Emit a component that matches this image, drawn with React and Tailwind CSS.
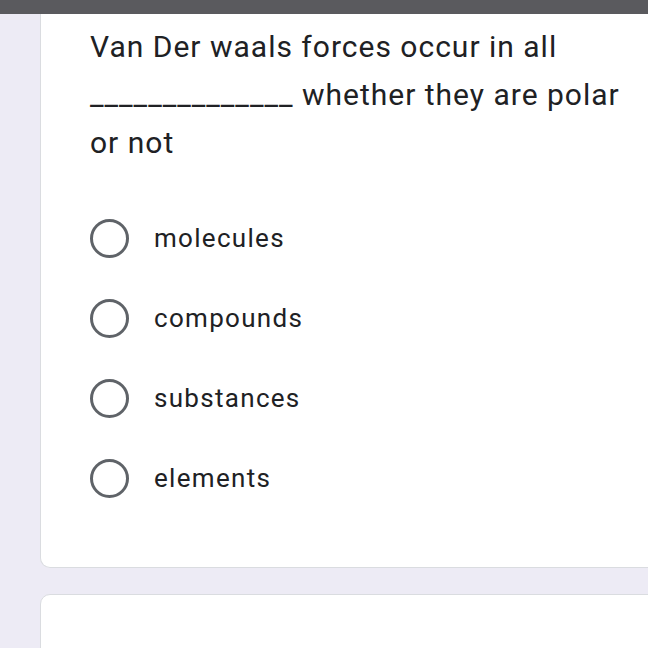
import React from "react";

const options = ["molecules", "compounds", "substances", "elements"];

export default function App() {
  return (
    <div className="w-[648px] h-[648px] overflow-hidden bg-[#edebf5] relative" style={{ fontFamily: "Roboto, sans-serif" }}>
      <div className="h-[14px] bg-[#5a5a5e]" />
      <div className="ml-[40px] w-[640px] h-[554px] bg-white border border-[#dadce0] border-t-0 rounded-bl-[10px] rounded-br-[10px] pl-[49px] pt-[9px]">
        <div className="text-[30px] leading-[48px] tracking-[1px] text-[#202124]">
          <div className="whitespace-nowrap">Van Der waals forces occur in all</div>
          <div className="whitespace-nowrap">______________ whether they are polar</div>
          <div>or not</div>
        </div>
        <div className="mt-[31px] flex flex-col">
          {options.map((o) => (
            <div key={o} className="h-[80px] flex items-center gap-[25px]">
              <div className="w-[39px] h-[39px] rounded-full border-[3px] border-[#5f6368]" />
              <span className="text-[26px] tracking-[1.3px] text-[#202124]">{o}</span>
            </div>
          ))}
        </div>
      </div>
      <div className="mt-[26px] ml-[40px] w-[640px] h-[100px] bg-white border border-[#dadce0] rounded-[10px]" />
    </div>
  );
}
